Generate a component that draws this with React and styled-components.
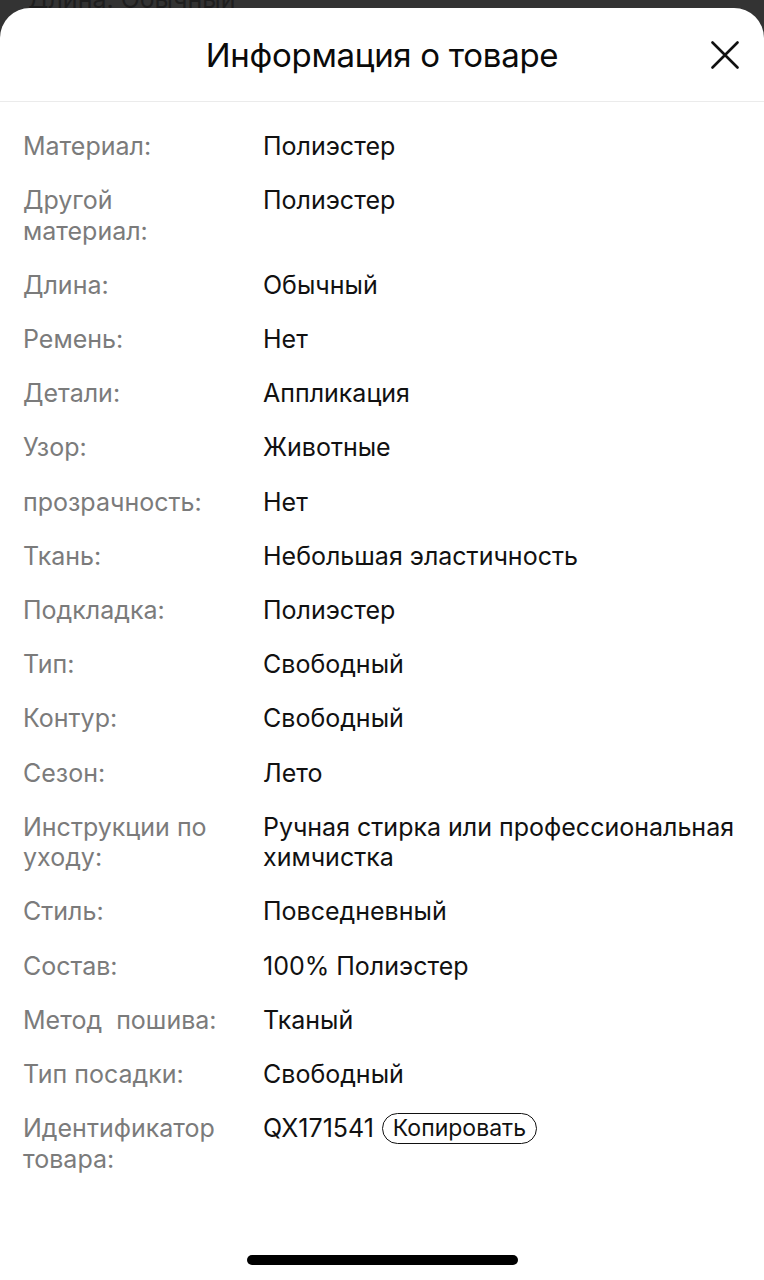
import React from "react";
import styled, { createGlobalStyle } from "styled-components";

const GlobalStyle = createGlobalStyle`
  html, body {
    margin: 0;
    padding: 0;
    background: #333333;
  }
  body {
    font-family: Inter, Roboto, "Noto Sans", "Liberation Sans", sans-serif;
    -webkit-font-smoothing: antialiased;
  }
`;

const specs = [
  ["Материал:", "Полиэстер"],
  ["Другой материал:", "Полиэстер"],
  ["Длина:", "Обычный"],
  ["Ремень:", "Нет"],
  ["Детали:", "Аппликация"],
  ["Узор:", "Животные"],
  ["прозрачность:", "Нет"],
  ["Ткань:", "Небольшая эластичность"],
  ["Подкладка:", "Полиэстер"],
  ["Тип:", "Свободный"],
  ["Контур:", "Свободный"],
  ["Сезон:", "Лето"],
  ["Инструкции по уходу:", "Ручная стирка или профессиональная химчистка"],
  ["Стиль:", "Повседневный"],
  ["Состав:", "100% Полиэстер"],
  ["Метод\u00a0 пошива:", "Тканый"],
  ["Тип посадки:", "Свободный"],
];

export default function App() {
  return (
    <Screen>
      <GlobalStyle />
      <Backdrop>
        <BackdropText>Длина: Обычный</BackdropText>
      </Backdrop>
      <Sheet>
        <Header>
          <Title>Информация о товаре</Title>
          <CloseButton aria-label="Закрыть">
            <svg width="28" height="28" viewBox="0 0 28 28">
              <path d="M1.5 1.5 L26.5 26.5 M26.5 1.5 L1.5 26.5" stroke="#111" strokeWidth="2.6" strokeLinecap="round" />
            </svg>
          </CloseButton>
        </Header>
        <SpecList>
          {specs.map(([label, value]) => (
            <SpecRow key={label}>
              <Label>{label}</Label>
              <Value>{value}</Value>
            </SpecRow>
          ))}
          <SpecRow>
            <Label>Идентификатор товара:</Label>
            <Value>
              <IdLine>
                QX171541
                <CopyButton>Копировать</CopyButton>
              </IdLine>
            </Value>
          </SpecRow>
        </SpecList>
        <HomeBar />
      </Sheet>
    </Screen>
  );
}

const Screen = styled.div`
  width: 764px;
  height: 1280px;
  display: flex;
  flex-direction: column;
  overflow: hidden;
`;

const Backdrop = styled.div`
  height: 8px;
  overflow: hidden;
`;

const BackdropText = styled.div`
  margin: -16px 0 0 28px;
  font-size: 25px;
  line-height: 30px;
  color: #1e1e1e;
`;

const Sheet = styled.div`
  flex: 1;
  background: #ffffff;
  border-radius: 30px 30px 0 0;
  display: flex;
  flex-direction: column;
`;

const Header = styled.header`
  height: 93px;
  display: flex;
  align-items: center;
  justify-content: center;
  position: relative;
  border-bottom: 1px solid #ebebeb;
`;

const Title = styled.h1`
  margin: 0;
  font-size: 33px;
  font-weight: 400;
  color: #0a0a0a;
  letter-spacing: -0.3px;
`;

const CloseButton = styled.button`
  position: absolute;
  right: 25px;
  top: 33px;
  width: 28px;
  height: 28px;
  padding: 0;
  border: none;
  background: none;
  display: flex;
`;

const SpecList = styled.div`
  flex: 1;
  display: flex;
  flex-direction: column;
  gap: 23.7px;
  padding: 29px 20px 0 23px;
`;

const SpecRow = styled.div`
  display: grid;
  grid-template-columns: 220px 1fr;
  column-gap: 20px;
  font-size: 25px;
  line-height: 30.5px;
`;

const Label = styled.div`
  color: #7b7b7b;
`;

const Value = styled.div`
  color: #111111;
`;

const IdLine = styled.div`
  display: flex;
  align-items: center;
  gap: 8px;
`;

const CopyButton = styled.button`
  font-family: inherit;
  font-size: 23px;
  line-height: 29px;
  color: #111111;
  background: #ffffff;
  border: 1.5px solid #111111;
  border-radius: 16px;
  padding: 0 10px;
`;

const HomeBar = styled.div`
  align-self: center;
  width: 271px;
  height: 10px;
  border-radius: 5px;
  background: #000000;
  margin-bottom: 15px;
`;
